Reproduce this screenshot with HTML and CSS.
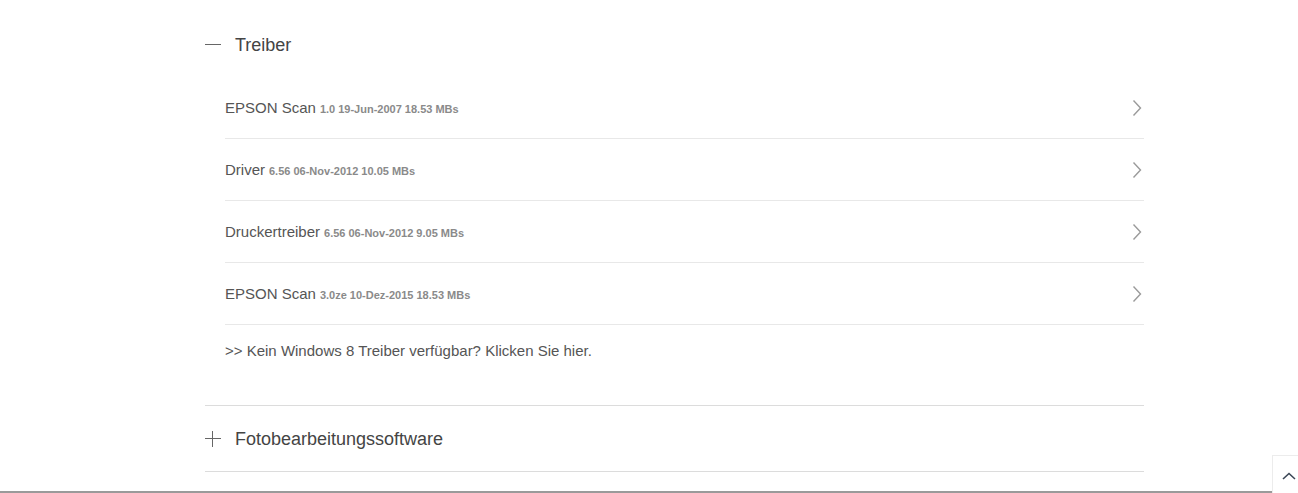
FILE: index.html
```html
<!DOCTYPE html>
<html lang="de">
<head>
<meta charset="utf-8">
<title>Treiber</title>
<link rel="stylesheet" href="styles.css">
</head>
<body>
<main class="page">
  <section class="acc open">
    <div class="acc-head">
      <span class="sign minus"></span>
      <span class="acc-title">Treiber</span>
    </div>
    <ul class="rows">
      <li class="row"><span class="name">EPSON Scan</span><span class="meta">1.0 19-Jun-2007 18.53 MBs</span><svg class="chev" viewBox="0 0 10 18" width="10" height="18"><path d="M1.5 1.5 L8.5 9 L1.5 16.5" fill="none" stroke="#9a9a9a" stroke-width="1.4"/></svg></li>
      <li class="row"><span class="name">Driver</span><span class="meta">6.56 06-Nov-2012 10.05 MBs</span><svg class="chev" viewBox="0 0 10 18" width="10" height="18"><path d="M1.5 1.5 L8.5 9 L1.5 16.5" fill="none" stroke="#9a9a9a" stroke-width="1.4"/></svg></li>
      <li class="row"><span class="name">Druckertreiber</span><span class="meta">6.56 06-Nov-2012 9.05 MBs</span><svg class="chev" viewBox="0 0 10 18" width="10" height="18"><path d="M1.5 1.5 L8.5 9 L1.5 16.5" fill="none" stroke="#9a9a9a" stroke-width="1.4"/></svg></li>
      <li class="row"><span class="name">EPSON Scan</span><span class="meta">3.0ze 10-Dez-2015 18.53 MBs</span><svg class="chev" viewBox="0 0 10 18" width="10" height="18"><path d="M1.5 1.5 L8.5 9 L1.5 16.5" fill="none" stroke="#9a9a9a" stroke-width="1.4"/></svg></li>
    </ul>
    <p class="hint">&gt;&gt; Kein Windows 8 Treiber verfügbar? Klicken Sie hier.</p>
  </section>
  <section class="acc closed">
    <div class="acc-head">
      <span class="sign plus"></span>
      <span class="acc-title">Fotobearbeitungssoftware</span>
    </div>
  </section>
</main>
<footer class="foot"></footer>
<a class="totop" href="#"><svg viewBox="0 0 14 8" width="14" height="8"><path d="M1 7 L7 1.5 L13 7" fill="none" stroke="#3b4656" stroke-width="1.6"/></svg></a>
</body>
</html>
```
FILE: styles.css
```css
html, body {
  margin: 0;
  padding: 0;
  background: #fff;
}
body {
  font-family: "Liberation Sans", Arial, sans-serif;
  color: #444;
  height: 493px;
  overflow: hidden;
  position: relative;
}
.page {
  width: 939px;
  margin: 0 0 0 205px;
}
.acc-head {
  display: flex;
  align-items: center;
  height: 20px;
}
.open .acc-head {
  padding: 35px 0 22px;
}
.closed {
  border-top: 1px solid #dcdcdc;
  border-bottom: 1px solid #dcdcdc;
}
.closed .acc-head {
  padding: 22px 0 22px;
  height: 21px;
}
.sign {
  position: relative;
  width: 16px;
  height: 16px;
  margin-right: 14px;
  flex: none;
}
.sign::before, .sign::after {
  content: "";
  position: absolute;
  background: #666;
}
.sign::before {
  left: 0;
  right: 0;
  top: 7px;
  height: 1px;
}
.plus::after {
  top: 0;
  bottom: 0;
  left: 7px;
  width: 1px;
}
.acc-title {
  font-size: 18px;
  color: #444;
  line-height: 20px;
}
.rows {
  list-style: none;
  margin: 0;
  padding: 0 0 0 20px;
}
.row {
  display: flex;
  align-items: center;
  height: 61px;
  border-bottom: 1px solid #e8e8e8;
}
.name {
  font-size: 15px;
  color: #555;
}
.meta {
  font-size: 11px;
  font-weight: bold;
  color: #8a8a8a;
  margin-left: 4px;
  margin-top: 2px;
}
.chev {
  margin-left: auto;
  margin-right: 2px;
}
.hint {
  margin: 0;
  padding: 17px 0 45px 20px;
  font-size: 15px;
  line-height: 18px;
  color: #555;
}
.foot {
  position: absolute;
  left: 0;
  right: 0;
  top: 491px;
  height: 2px;
  background: #9a9a9a;
}
.totop {
  position: absolute;
  left: 1272px;
  top: 455px;
  width: 30px;
  height: 40px;
  background: #fff;
  border: 1px solid #ececec;
  display: flex;
  justify-content: center;
  padding-top: 16px;
  box-sizing: border-box;
}
.totop svg {
  margin-left: 4px;
}
```
